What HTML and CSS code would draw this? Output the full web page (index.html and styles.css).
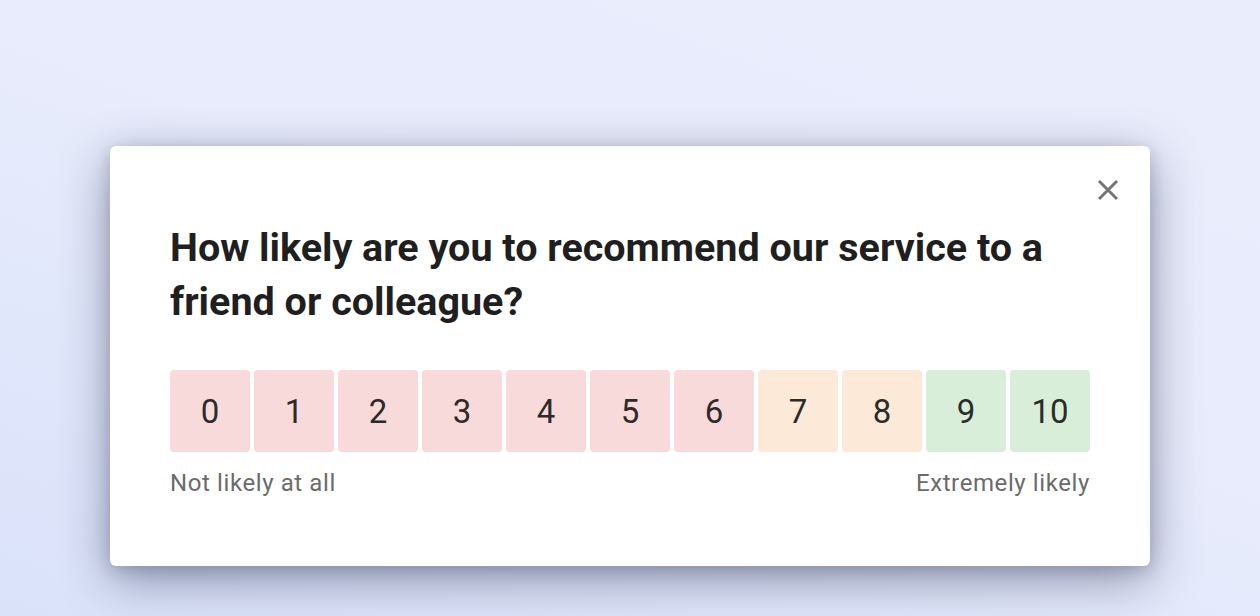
FILE: index.html
```html
<!DOCTYPE html>
<html lang="en">
<head>
<meta charset="utf-8">
<link rel="stylesheet" href="styles.css">
<title>NPS Survey</title>
</head>
<body>
<div class="stage">
  <div class="modal">
    <button class="close" aria-label="Close">
      <svg width="22" height="22" viewBox="0 0 22 22"><path d="M2 2L20 20M20 2L2 20" stroke="#757575" stroke-width="3" stroke-linecap="butt"/></svg>
    </button>
    <h1 class="question">How likely are you to recommend our service to a friend or colleague?</h1>
    <div class="scale">
      <button class="score red">0</button>
      <button class="score red">1</button>
      <button class="score red">2</button>
      <button class="score red">3</button>
      <button class="score red">4</button>
      <button class="score red">5</button>
      <button class="score red">6</button>
      <button class="score amber">7</button>
      <button class="score amber">8</button>
      <button class="score green">9</button>
      <button class="score green">10</button>
    </div>
    <div class="labels">
      <span>Not likely at all</span>
      <span>Extremely likely</span>
    </div>
  </div>
</div>
</body>
</html>
```
FILE: styles.css
```css
* { box-sizing: border-box; }
html, body { margin: 0; padding: 0; }
body {
  width: 1260px;
  height: 616px;
  overflow: hidden;
  font-family: Roboto, "Liberation Sans", sans-serif;
  background: linear-gradient(200deg, #eaedfc 0%, #e8ecfc 45%, #dae2fa 100%);
}
.stage {
  padding: 146px 110px 0 110px;
}
.modal {
  position: relative;
  width: 1040px;
  height: 420px;
  background: #fff;
  border-radius: 6px;
  padding: 75px 60px 0 60px;
  box-shadow: 0 14px 50px rgba(25, 30, 65, 0.42), 0 4px 16px rgba(25, 30, 65, 0.18);
}
.close {
  position: absolute;
  top: 33px;
  right: 31px;
  width: 22px;
  height: 22px;
  padding: 0;
  border: 0;
  background: none;
  display: block;
}
.close svg { display: block; }
.question {
  margin: 0;
  font-size: 39.5px;
  font-weight: 700;
  line-height: 54px;
  color: #1f1f1f;
  letter-spacing: 0;
}
.scale {
  display: flex;
  gap: 4px;
  margin-top: 41px;
}
.score {
  width: 80px;
  height: 82px;
  border: 0;
  border-radius: 4px;
  font-family: Roboto, "Liberation Sans", sans-serif;
  font-size: 33px;
  font-weight: 400;
  color: #2b2b2b;
  padding: 0;
}
.red { background: #f8dada; }
.amber { background: #fce9d8; }
.green { background: #d8eed9; }
.labels {
  display: flex;
  justify-content: space-between;
  margin-top: 17px;
  font-size: 24px;
  color: #6b6b6b;
  line-height: 28px;
  letter-spacing: 0.6px;
}
```
